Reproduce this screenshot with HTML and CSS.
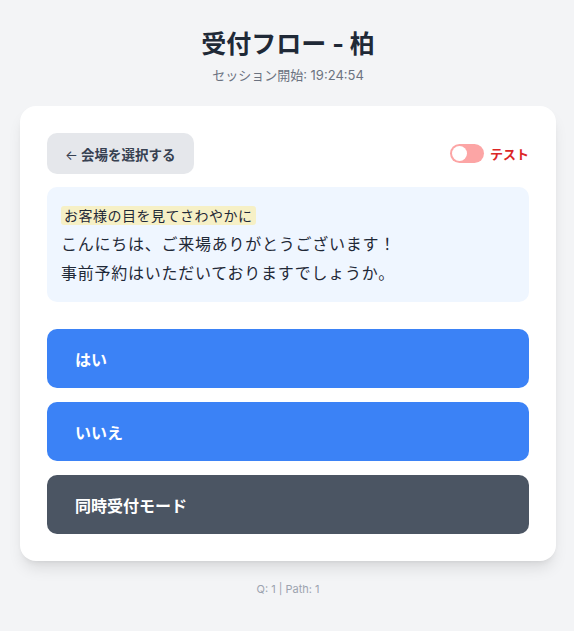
FILE: index.html
```html
<!DOCTYPE html>
<html lang="ja">
<head>
<meta charset="utf-8">
<title>受付フロー - 柏</title>
<link rel="stylesheet" href="styles.css">
</head>
<body>
<main class="page">
  <header class="page-header">
    <h1 class="title">受付フロー - 柏</h1>
    <p class="subtitle">セッション開始: 19:24:54</p>
  </header>
  <section class="card">
    <div class="toolbar">
      <button class="back-btn"><span class="arrow">←</span> 会場を選択する</button>
      <label class="test-toggle">
        <span class="switch"><span class="knob"></span></span>
        <span class="test-label">テスト</span>
      </label>
    </div>
    <div class="message">
      <div class="line"><span class="hint">お客様の目を見てさわやかに</span></div>
      <div class="line">こんにちは、ご来場ありがとうございます！</div>
      <div class="line">事前予約はいただいておりますでしょうか。</div>
    </div>
    <div class="choices">
      <button class="choice choice-primary">はい</button>
      <button class="choice choice-primary">いいえ</button>
      <button class="choice choice-dark">同時受付モード</button>
    </div>
  </section>
  <footer class="footer">Q: 1 | Path: 1</footer>
</main>
</body>
</html>
```

FILE: styles.css
```css
* { box-sizing: border-box; }
html, body { margin: 0; padding: 0; }
body {
  background: #f3f4f6;
  font-family: Inter, "Noto Sans CJK JP", "Noto Sans", sans-serif;
  color: #1f2937;
}
.page {
  padding: 28px 18px 20px 20px;
  display: flex;
  flex-direction: column;
}
.page-header {
  text-align: center;
}
.title {
  margin: 0;
  font-size: 25px;
  line-height: 32px;
  font-weight: 700;
  color: #1f2937;
}
.subtitle {
  margin: 5px 0 0;
  font-size: 13px;
  line-height: 20px;
  color: #6b7280;
}
.card {
  margin-top: 21px;
  background: #ffffff;
  border-radius: 16px;
  padding: 27px;
  box-shadow: 0 10px 15px -3px rgba(0,0,0,0.1), 0 4px 6px -4px rgba(0,0,0,0.1);
}
.toolbar {
  display: flex;
  justify-content: space-between;
  align-items: center;
}
.back-btn {
  height: 41px;
  padding: 0 18px;
  border: none;
  border-radius: 10px;
  background: #e5e7eb;
  color: #374151;
  font-family: inherit;
  font-size: 13.5px;
  font-weight: 700;
}
.arrow {
  font-weight: 400;
}
.test-toggle {
  display: flex;
  align-items: center;
  gap: 6px;
}
.switch {
  width: 34px;
  height: 19px;
  border-radius: 10px;
  background: #fca5a5;
  display: flex;
  align-items: center;
  padding: 0 2px;
}
.knob {
  width: 15px;
  height: 15px;
  border-radius: 50%;
  background: #ffffff;
}
.test-label {
  color: #dc2626;
  font-size: 13px;
  font-weight: 700;
}
.message {
  margin-top: 13px;
  background: #eff6ff;
  border-radius: 10px;
  padding: 14px;
  font-size: 16px;
  line-height: 29px;
  letter-spacing: 0.75px;
  color: #1f2937;
}
.hint {
  background: #f6f0c6;
  border-radius: 3px;
  padding: 1px 3px;
  font-size: 14px;
  letter-spacing: 0.5px;
  color: #1f2937;
}
.choices {
  margin-top: 27px;
  display: flex;
  flex-direction: column;
  gap: 14px;
}
.choice {
  height: 59px;
  border: none;
  border-radius: 10px;
  padding: 0 28px;
  text-align: left;
  font-family: inherit;
  font-size: 16px;
  font-weight: 700;
  color: #ffffff;
}
.choice-primary { background: #3b82f6; }
.choice-dark { background: #4b5563; }
.footer {
  margin-top: 20px;
  text-align: center;
  font-size: 11px;
  line-height: 16px;
  color: #9ca3af;
}
```
